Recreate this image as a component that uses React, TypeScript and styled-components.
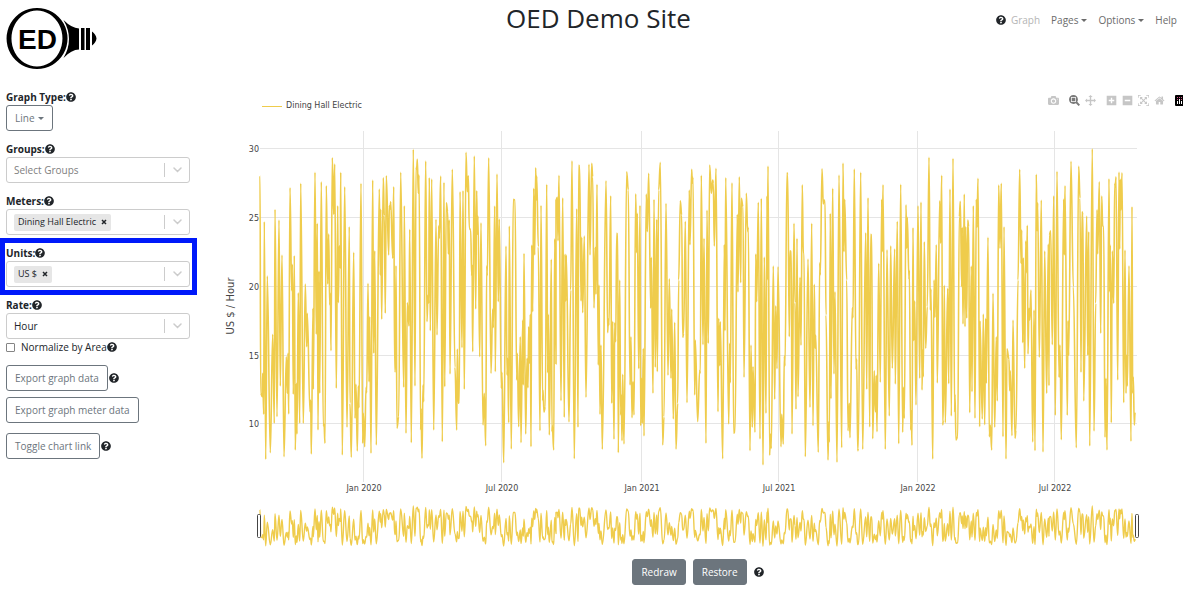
import React from 'react';
import styled, { createGlobalStyle } from 'styled-components';
import { FaQuestionCircle } from 'react-icons/fa';

const GlobalStyle = createGlobalStyle`
  *, *::before, *::after { box-sizing: border-box; }
  body {
    margin: 0;
    background: #fff;
    color: #212529;
    font-family: "Open Sans", "Noto Sans", sans-serif;
    font-size: 10px;
    line-height: 16px;
  }
  button, input, select { font: inherit; color: inherit; }
`;

const INK = '#212529';
const GREY = '#6c757d';
const GOLD = '#efcc4c';

/* ---------- header ---------- */

const Header = styled.header`
  display: grid;
  grid-template-columns: 36fr auto 35fr;
  align-items: start;
  height: 89px;
  padding: 0 6px;
`;

const LogoLink = styled.a`
  display: block;
  width: 92px;
  margin-top: 7px;
  svg { display: block; }
`;

const Title = styled.h1`
  margin: 0;
  font-size: 26px;
  line-height: 36px;
  font-weight: 500;
`;

const Nav = styled.nav`
  display: flex;
  justify-content: flex-end;
  align-items: center;
  gap: 11px;
  margin-top: 12px;
`;

const NavGroup = styled.span`
  display: flex;
  align-items: center;
  gap: 5px;
`;

const NavLink = styled.a<{ $muted?: boolean }>`
  color: ${(p) => (p.$muted ? '#b5b5b5' : '#6b6b6b')};
  text-decoration: none;
`;

const NavButton = styled.button`
  display: flex;
  align-items: center;
  gap: 3px;
  padding: 0;
  border: 0;
  background: none;
  color: #6b6b6b;
`;

const Caret = styled.span`
  border: 3px solid transparent;
  border-top-color: currentColor;
  border-bottom: 0;
`;

const HelpIcon = styled(FaQuestionCircle)`
  flex: none;
  width: 10px;
  height: 10px;
  color: ${INK};
`;

function Logo() {
  return (
    <svg width="92" height="63" viewBox="0 0 92 63" role="img" aria-label="OED">
      <path fillRule="evenodd" d="M31 1a30.500 30.500 0 1 0 .1 0zM31 3.500a25.500 28 0 1 1-.1 0z" />
      <path d="M57.500 13q8 8 15.500 8.500v21q-7.500 0-15.500 8.500q11-19 0-38z" />
      <path d="M75 21h3.500v22H75zM80 21h4v22h-4zM86 24.500q4 3 4.500 7q-.5 4-4.500 7z" />
      <text x="12" y="42" fontFamily="Liberation Sans, Arial, sans-serif" fontWeight="bold" fontSize="28">ED</text>
    </svg>
  );
}

/* ---------- sidebar ---------- */

const Main = styled.main`
  display: grid;
  grid-template-columns: 213px minmax(0, 1fr);
`;

const Sidebar = styled.aside`
  display: flex;
  flex-direction: column;
  width: 190px;
  padding-left: 6px;
`;

const Field = styled.div<{ $highlighted?: boolean; $last?: boolean }>`
  position: relative;
  margin-bottom: ${(p) => (p.$last ? 0 : 10)}px;
  ${(p) => p.$highlighted && `
    &::after {
      content: "";
      position: absolute;
      inset: -7px -7px -8px -6px;
      border: 5px solid #0019fa;
      pointer-events: none;
    }
  `}
`;

const LabelRow = styled.div`
  display: flex;
  align-items: center;
  height: 16px;
`;

const Label = styled.label`
  font-weight: 700;
`;

const Control = styled.div`
  display: flex;
  align-items: center;
  height: 26px;
  padding-left: 7px;
  border: 1px solid #ccc;
  border-radius: 3px;
  background: #fff;
`;

const Select = styled.select<{ $placeholder?: boolean }>`
  flex: 1;
  min-width: 0;
  height: 24px;
  padding: 0;
  border: 0;
  appearance: none;
  background: transparent;
  color: ${(p) => (p.$placeholder ? '#808080' : INK)};
`;

const Indicator = styled.span`
  display: flex;
  align-items: center;
  justify-content: center;
  width: 25px;
  height: 14px;
  border-left: 1px solid #ccc;
`;

const Chip = styled.span`
  display: flex;
  align-items: center;
  gap: 5px;
  height: 17px;
  padding: 0 4px;
  border-radius: 2px;
  background: #e6e6e6;
  font-size: 9px;
  white-space: nowrap;
`;

const ChipRemove = styled.button`
  display: flex;
  padding: 0;
  border: 0;
  background: none;
`;

const CheckRow = styled.div`
  display: flex;
  align-items: center;
  height: 16px;
  margin-bottom: 10px;
`;

const Checkbox = styled.input`
  appearance: none;
  width: 9px;
  height: 9px;
  margin: 0 6px 0 0;
  border: 1px solid #858585;
  border-radius: 1px;
  background: #fff;
`;

const ActionRow = styled.div<{ $gap: number }>`
  display: flex;
  align-items: center;
  gap: 1px;
  margin-bottom: ${(p) => p.$gap}px;
`;

const Button = styled.button<{ $solid?: boolean }>`
  display: flex;
  align-items: center;
  gap: 3px;
  height: 26px;
  padding: 0 8px;
  border: 1px solid ${GREY};
  border-radius: 3px;
  background: ${(p) => (p.$solid ? GREY : '#fff')};
  color: ${(p) => (p.$solid ? '#fff' : GREY)};
  white-space: nowrap;
`;

type PickerProps = {
  id: string;
  label: string;
  option?: string;
  chip?: string;
  placeholder?: boolean;
  highlighted?: boolean;
  last?: boolean;
};

function Picker({ id, label, option = '', chip, placeholder, highlighted, last }: PickerProps) {
  return (
    <Field $highlighted={highlighted} $last={last}>
      <LabelRow>
        <Label htmlFor={id}>{label}</Label>
        <HelpIcon />
      </LabelRow>
      <Control>
        {chip && (
          <Chip>
            {chip}
            <ChipRemove type="button" aria-label={`Remove ${chip}`}>
              <svg width="6" height="6" viewBox="0 0 6 6">
                <path d="M1 1l4 4M5 1l-4 4" stroke={INK} strokeWidth="1.500" />
              </svg>
            </ChipRemove>
          </Chip>
        )}
        <Select id={id} $placeholder={placeholder}>
          <option>{option}</option>
        </Select>
        <Indicator>
          <svg width="9" height="6" viewBox="0 0 9 6">
            <path d="M1 1l3.500 3.500L8 1" fill="none" stroke="#ccc" strokeWidth="1.500" strokeLinecap="round" />
          </svg>
        </Indicator>
      </Control>
    </Field>
  );
}

/* ---------- chart ---------- */

const ChartPane = styled.section`
  display: flex;
  flex-direction: column;
  min-width: 0;
`;

const ChartTop = styled.div`
  display: flex;
  justify-content: space-between;
  height: 31px;
  padding-left: 49px;
  overflow: hidden;
`;

const Legend = styled.div`
  display: flex;
  align-items: center;
  gap: 4px;
  height: 16px;
  margin-top: 9px;
  color: #444;
  font-family: "DejaVu Sans", Verdana, sans-serif;
  font-size: 8px;
`;

const LegendLine = styled.span`
  width: 20px;
  height: 1px;
  background: ${GOLD};
`;

const ModeBar = styled.div`
  display: flex;
  align-items: center;
  height: 12px;
  margin: 5px -3px 0 0;
`;

const ModeGroup = styled.div`
  display: flex;
  gap: 5px;
  margin-left: 10px;
`;

const ModeButton = styled.button<{ $active?: boolean }>`
  display: flex;
  padding: 0;
  border: 0;
  background: none;
  svg { display: block; fill: ${(p) => (p.$active ? '#7a7a7a' : '#c6c6c6')}; }
`;

const Plot = styled.svg`
  display: block;
  width: 100%;
  height: auto;
  font-family: "DejaVu Sans", Verdana, sans-serif;
  font-size: 8px;
  fill: #444;
`;

const ChartActions = styled.div`
  display: flex;
  justify-content: center;
  align-items: center;
  gap: 7px;
  margin-top: 9px;
`;

const icons: Record<string, [number, string]> = {
  camera: [1000, 'm500 450c-83 0-150-67-150-150 0-83 67-150 150-150 83 0 150 67 150 150 0 83-67 150-150 150z m400 150h-120c-16 0-34 13-39 29l-31 93c-6 15-23 28-40 28h-340c-16 0-34-13-39-28l-31-94c-6-15-23-28-40-28h-120c-55 0-100-45-100-100v-450c0-55 45-100 100-100h800c55 0 100 45 100 100v450c0 55-45 100-100 100z m-400-550c-138 0-250 112-250 250 0 138 112 250 250 250 138 0 250-112 250-250 0-138-112-250-250-250z m365 380c-19 0-35 16-35 35 0 19 16 35 35 35 19 0 35-16 35-35 0-19-16-35-35-35z'],
  zoom: [1000, 'm1000-25l-250 251c40 63 63 138 63 218 0 224-182 406-407 406-224 0-406-182-406-406s183-406 407-406c80 0 155 22 218 62l250-250 125 125z m-812 250l0 438 437 0 0-438-437 0z m62 375l313 0 0-312-313 0 0 312z'],
  pan: [1000, 'm1000 350l-187 188 0-125-250 0 0 250 125 0-188 187-187-187 125 0 0-250-250 0 0 125-188-188 186-187 0 125 252 0 0-250-125 0 187-188 188 188-125 0 0 250 250 0 0-126 187 188z'],
  plus: [875, 'm1 787l0-875 875 0 0 875-875 0z m687-500l-187 0 0-187-125 0 0 187-188 0 0 125 188 0 0 187 125 0 0-187 187 0 0-125z'],
  minus: [875, 'm0 788l0-876 876 0 0 876-876 0z m688-500l-500 0 0 125 500 0 0-125z'],
  autoscale: [1000, 'm250 850l-187 0-63 0 0-62 0-188 63 0 0 188 187 0 0 62z m688 0l-188 0 0-62 188 0 0-188 62 0 0 188 0 62-62 0z m-875-938l0 188-63 0 0-188 0-62 63 0 187 0 0 62-187 0z m875 188l0-188-188 0 0-62 188 0 62 0 0 62 0 188-62 0z m-125 188l-1 0-93-94-156 156 156 156 92-93 2 0 0 250-250 0 0-2 93-92-156-156-156 156 94 92 0 2-250 0 0-250 0 0 93 93 157-156-157-156-93 94 0 0 0-250 250 0 0 0-94 93 156 157 156-157-93-93 0 0 250 0 0 250z'],
  home: [928, 'm786 296v-267q0-15-11-26t-25-10h-214v214h-143v-214h-214q-15 0-25 10t-11 26v267q0 1 0 2t0 2l321 264 321-264q1-1 1-4z m124 39l-34-41q-5-5-12-6h-2q-7 0-12 3l-386 322-386-322q-7-4-13-4-7 2-12 7l-35 41q-4 5-3 13t6 12l401 334q18 15 42 15t43-15l136-114v109q0 8 5 13t13 5h107q8 0 13-5t5-13v-227l122-102q5-5 6-12t-4-13z'],
};

function ModeIcon({ name, label, active }: { name: string; label: string; active?: boolean }) {
  const [width, d] = icons[name];
  return (
    <ModeButton type="button" aria-label={label} $active={active}>
      <svg width="11" height="11" viewBox={`0 0 ${width} 1000`}>
        <path d={d} transform="matrix(1 0 0 -1 0 850)" />
      </svg>
    </ModeButton>
  );
}

/* Readings as "x y" pairs in thirds of a plot unit; each run is preceded by its x offset. */
const runs: [number, string][] = [
  [0, '120 167,122 820,127 830,128 760,131 883,133 305,137 1018,142 468,151 998,158 643,163 910,165 268,171 890,177 300,181 798,186 405,192 1010,199 710,202 820,204 700,206 882,210 203,215 512,217 433,220 823,223 407,226 990,229 790,231 942,235 518,239 910,242 190,250 910,256 492,260 680,262 580,270 875,272 840,274 1002,279 565,280 808,285 157,289 643,292 310,294 930,297 453,299 820,304 185,310 918,312 912,315 970,319 197,323 492,326 342,329 555,331 520,333 692,337 113,341 283,344 132,349 805,353 257,355 548,358 377,361 445,362 157,367 1005,374 200,381 922,388 320,390 850,394 1012,401 397,405 895,408 793,412 993,415 798,417 863,423 190,428 970,430 880,434 980,438 802,440 818,444 490,447 785,449 590,453 1000,458 180,461 700,464 392,469 975,478 207,481 465,482 268,485 598,490 173,493 287,496 580,499 167,506 405,508 257,510 268,512 245,518 415,521 200,524 752,526 755,528 437,531 925,536 890,542 157,551 802,553 257,558 940,562 548,567 618,569 328,574 968,580 88,585 798,588 142,590 148,592 118,595 220,597 165,602 930,603 865,606 1015,609 795,611 845,617 123,621 605,624 525,626 550,628 173,631 632,635 177,641 930,648 298,651 645,656 317,658 355,662 168,667 965,672 187,674 800,679 248,683 275,685 402,688 300,690 762,697 148,705 742,710 930,712 687,715 850,718 845,720 215,726 683,729 212,733 808,738 97,742 215,745 167,748 325,752 330,755 468,756 433,758 695,763 108,767 567,770 212,772 343,774 288,779 710,783 308,789 915,793 820,797 977,800 437,802 467,806 113,813 760,818 567,820 623,824 258,826 755,831 162,835 545,838 297,844 805,846 757,851 1028,858 378,861 765,863 715,866 908,868 318'],
  [870, '4 987,10 238,15 240,20 780,22 700,26 920,31 650,33 968,38 600,40 795,42 400,47 942,51 715,54 803,56 620,58 730,61 583,63 980,65 375,68 575,71 205,74 405,77 143,79 240,80 168,85 380,90 932,93 256,98 842,99 810,102 877,106 860,110 193,113 758,115 583,118 945,124 418,126 935,127 915,131 990,134 356,138 732,138 240,142 232,144 362,147 166,153 842,158 233,163 892,165 402,167 543,169 405,177 906,182 510,186 122,193 1016,200 266,204 922,206 136,209 140,213 543,215 352,218 578,223 348,228 832,237 133,240 405,245 130,248 170,252 564,256 382,258 523,261 193,265 735,267 495,270 883,273 675,277 988,288 182,293 638,295 597,297 615,302 227,305 850,308 604,312 958,314 608,317 665,320 340,323 342,325 998,329 480,332 885,334 825,336 962,338 763,342 972,350 155,355 210,360 795,363 650,366 893,369 785,372 885,377 221,380 398,382 280,386 746,390 256,392 917,395 775,397 910,400 685,402 948,409 222,412 335,416 160,422 565,424 412,429 820,432 238,436 742,440 298,442 755,446 210,451 127,458 975,462 890,468 250,474 766,478 476,483 775,485 567,490 897,494 607,498 987,503 850,506 480,511 242,515 285,518 652,521 640,526 304,531 848,538 210,540 374,545 148,547 190,549 172,554 825,556 660,563 905,569 750,571 760,574 166,579 674,582 355,588 970,591 270,595 670,599 135,604 220,608 180,610 190,613 378,618 145,624 875,626 595,629 737,631 605,638 1016,643 374,645 632,647 173,656 912,659 670,661 788,666 188,671 940,675 935,682 283,684 516,688 170,692 488,694 235,699 260,702 772,709 220,713 335,715 322,720 992,723 675,727 922,729 740,735 937,737 402,740 545,745 247,750 957,754 235,759 1035,763 411,768 880,771 228,772 480,774 138,779 1006,781 942,784 985,790 438,794 838,797 557,801 746,804 440,813 980,815 883,820 972,823 708,825 738,831 158,833 165,838 650,840 392,844 395,846 942,852 310,855 548,858 868,861 355,864 830,870 472,873 676,877 194,880 398,882 400,886 1010,894 417,900 862,905 310,909 917,913 493,915 685,917 645,925 997,929 428'],
  [1800, '1 465,6 146,10 252,12 240,15 242,18 585,24 1020,26 905,28 967,31 280,33 836,38 205,42 762,45 515,51 1027,57 165,65 983,69 129,72 395,74 238,80 480,84 932,88 850,90 953,97 563,99 593,103 147,108 748,110 717,113 992,115 985,122 157,128 988,137 338,140 808,144 233,149 921,152 343,155 345,158 956,163 752,166 875,168 873,169 766,171 935,176 430,181 787,185 238,187 395,189 194,196 988,201 389,208 888,212 377,217 745,224 387,226 792,232 304,236 971,242 193,248 937,250 802,253 895,258 254,260 385,262 292,267 478,268 450,272 930,274 872,276 976,279 323,281 662,284 543,288 855,294 257,299 775,303 246,306 810,308 690,310 770,313 365,317 685,322 560,327 112,331 570,333 507,338 1017,342 480,345 592,349 374,352 789,359 242,362 370,365 166,368 915,370 900,373 496,376 908,383 505,386 791,390 207,394 888,399 115,404 877,405 823,408 960,413 950,418 290,421 244,425 500,427 322,429 612,433 222,435 620,437 320,440 595,443 300,446 320,449 878,454 438,456 815,460 257,465 895,469 238,471 322,474 175,479 920,480 603,487 897,490 582,494 914,497 595,499 790,504 352,508 950,511 915,515 990,519 520,524 922,529 650,532 843,536 195,540 385,544 190,549 950,552 320,558 1017,561 686,567 718,569 812,571 752,576 947,579 600,585 955,588 930,594 480,599 148,603 430,605 330,608 668,610 413,614 745,617 363,620 458,622 316,624 702,627 565,629 600,633 510,638 966,642 570,645 992,649 163,651 332,653 248,658 712,664 240,669 996,674 393,680 820,685 372,687 797,688 345,692 332,697 674,701 227,706 886,711 154,717 772,720 675,724 959,731 237,733 405,735 197,742 886,744 602,746 706,753 124,760 500,769 983,776 139,780 235,783 757,786 275,789 285,791 843,800 288,803 706,806 335,809 978,817 86,822 933,827 550,831 269,833 402,838 185,842 640,845 228,848 318,851 320,855 952,858 775,861 990,867 176,869 515,871 375,874 908,877 393,881 550,884 190,886 202,888 170,893 780,897 156,899 387,901 178,903 270,906 158,911 848,915 390,918 820,920 706,922 798,927 437,933 964,936 260,938 820,940 770,943 915,945 880,947 882'],
];

const points = runs.flatMap(([offset, text]) =>
  text.split(',').map((pair) => {
    const [x, y] = pair.split(' ').map(Number);
    return [(x + offset) / 3 + 7, y / 3];
  }),
);

/* Smooth curve with level tangents at each reading. */
function curve(scaleY: (y: number) => number) {
  return points
    .map(([x, y], i) => {
      const py = scaleY(y).toFixed(1);
      if (i === 0) return `M${x.toFixed(1)} ${py}`;
      const [x0, y0] = points[i - 1];
      const bend = (x - x0) * 0.4;
      return `C${(x0 + bend).toFixed(1)} ${scaleY(y0).toFixed(1)} ${(x - bend).toFixed(1)} ${py} ${x.toFixed(1)} ${py}`;
    })
    .join('');
}

const mainCurve = curve((y) => y);
const overviewCurve = curve((y) => 386 + ((y - 29) * 40) / 313);

const yTicks: [string, number][] = [['30', 28], ['25', 97], ['20', 166], ['15', 235], ['10', 303]];
const xTicks: [string, number][] = [
  ['Jan 2020', 150], ['Jul 2020', 288], ['Jan 2021', 428],
  ['Jul 2021', 565], ['Jan 2022', 704], ['Jul 2022', 841],
];

function Chart() {
  return (
    <Plot viewBox="0 0 970 430" role="img" aria-label="Dining Hall Electric, US $ / Hour">
      <g fill="#e5e5e5">
        {yTicks.map(([t, y]) => <rect key={t} x="47" y={y} width="877" height="1" />)}
        {xTicks.map(([t, x]) => <rect key={t} x={x} y="11" width="1" height="351" />)}
      </g>
      <path d={mainCurve} fill="none" stroke={GOLD} strokeWidth="1.600" strokeLinejoin="round" />
      {yTicks.map(([t, y]) => <text key={t} x="46" y={y + 4} textAnchor="end">{t}</text>)}
      {xTicks.map(([t, x]) => <text key={t} x={x + 1} y="371" textAnchor="middle">{t}</text>)}
      <text transform="translate(21 186) rotate(-90)" textAnchor="middle" fontSize="10">US $ / Hour</text>
      <path d={overviewCurve} fill="none" stroke={GOLD} strokeWidth="1.400" strokeLinejoin="round" />
      <g fill="#fff" stroke="#444">
        <rect x="44.500" y="394.500" width="3" height="23" rx="1" />
        <rect x="922.500" y="394.500" width="3" height="23" rx="1" />
      </g>
    </Plot>
  );
}

export default function App() {
  return (
    <>
      <GlobalStyle />
      <Header>
        <LogoLink href="#"><Logo /></LogoLink>
        <Title>OED Demo Site</Title>
        <Nav>
          <NavGroup>
            <HelpIcon />
            <NavLink href="#" $muted>Graph</NavLink>
          </NavGroup>
          <NavButton type="button">Pages<Caret /></NavButton>
          <NavButton type="button">Options<Caret /></NavButton>
          <NavLink href="#">Help</NavLink>
        </Nav>
      </Header>
      <Main>
        <Sidebar>
          <Field>
            <LabelRow>
              <Label htmlFor="graph-type">Graph Type:</Label>
              <HelpIcon />
            </LabelRow>
            <Button id="graph-type" type="button">Line<Caret /></Button>
          </Field>
          <Picker id="groups" label="Groups:" option="Select Groups" placeholder />
          <Picker id="meters" label="Meters:" chip="Dining Hall Electric" />
          <Picker id="units" label="Units:" chip="US $" highlighted />
          <Picker id="rate" label="Rate:" option="Hour" last />
          <CheckRow>
            <Checkbox id="normalize" type="checkbox" />
            <label htmlFor="normalize">Normalize by Area</label>
            <HelpIcon />
          </CheckRow>
          <ActionRow $gap={6}>
            <Button type="button">Export graph data</Button>
            <HelpIcon />
          </ActionRow>
          <ActionRow $gap={10}>
            <Button type="button">Export graph meter data</Button>
          </ActionRow>
          <ActionRow $gap={0}>
            <Button type="button">Toggle chart link</Button>
            <HelpIcon />
          </ActionRow>
        </Sidebar>
        <ChartPane>
          <ChartTop>
            <Legend><LegendLine />Dining Hall Electric</Legend>
            <ModeBar>
              <ModeGroup><ModeIcon name="camera" label="Download plot" /></ModeGroup>
              <ModeGroup>
                <ModeIcon name="zoom" label="Zoom" active />
                <ModeIcon name="pan" label="Pan" />
              </ModeGroup>
              <ModeGroup>
                <ModeIcon name="plus" label="Zoom in" />
                <ModeIcon name="minus" label="Zoom out" />
                <ModeIcon name="autoscale" label="Autoscale" />
                <ModeIcon name="home" label="Reset axes" />
              </ModeGroup>
              <ModeGroup>
                <ModeButton type="button" aria-label="Plotly">
                  <svg width="11" height="11" viewBox="0 0 11 11">
                    <rect width="11" height="11" rx="1" style={{ fill: '#000' }} />
                    <g style={{ fill: '#fff' }}>
                      <rect x="2" y="6" width="1" height="3" />
                      <rect x="4" y="4" width="1" height="5" />
                      <rect x="6" y="6" width="1" height="3" />
                      <rect x="8" y="4" width="1" height="5" />
                    </g>
                    <g style={{ fill: '#d9508a' }}>
                      <rect x="2" y="2" width="1" height="1" />
                      <rect x="2" y="4" width="1" height="1" />
                      <rect x="4" y="2" width="1" height="1" />
                      <rect x="6" y="2" width="1" height="1" />
                      <rect x="6" y="4" width="1" height="1" />
                    </g>
                  </svg>
                </ModeButton>
              </ModeGroup>
            </ModeBar>
          </ChartTop>
          <Chart />
          <ChartActions>
            <Button type="button" $solid>Redraw</Button>
            <Button type="button" $solid>Restore</Button>
            <HelpIcon />
          </ChartActions>
        </ChartPane>
      </Main>
    </>
  );
}
